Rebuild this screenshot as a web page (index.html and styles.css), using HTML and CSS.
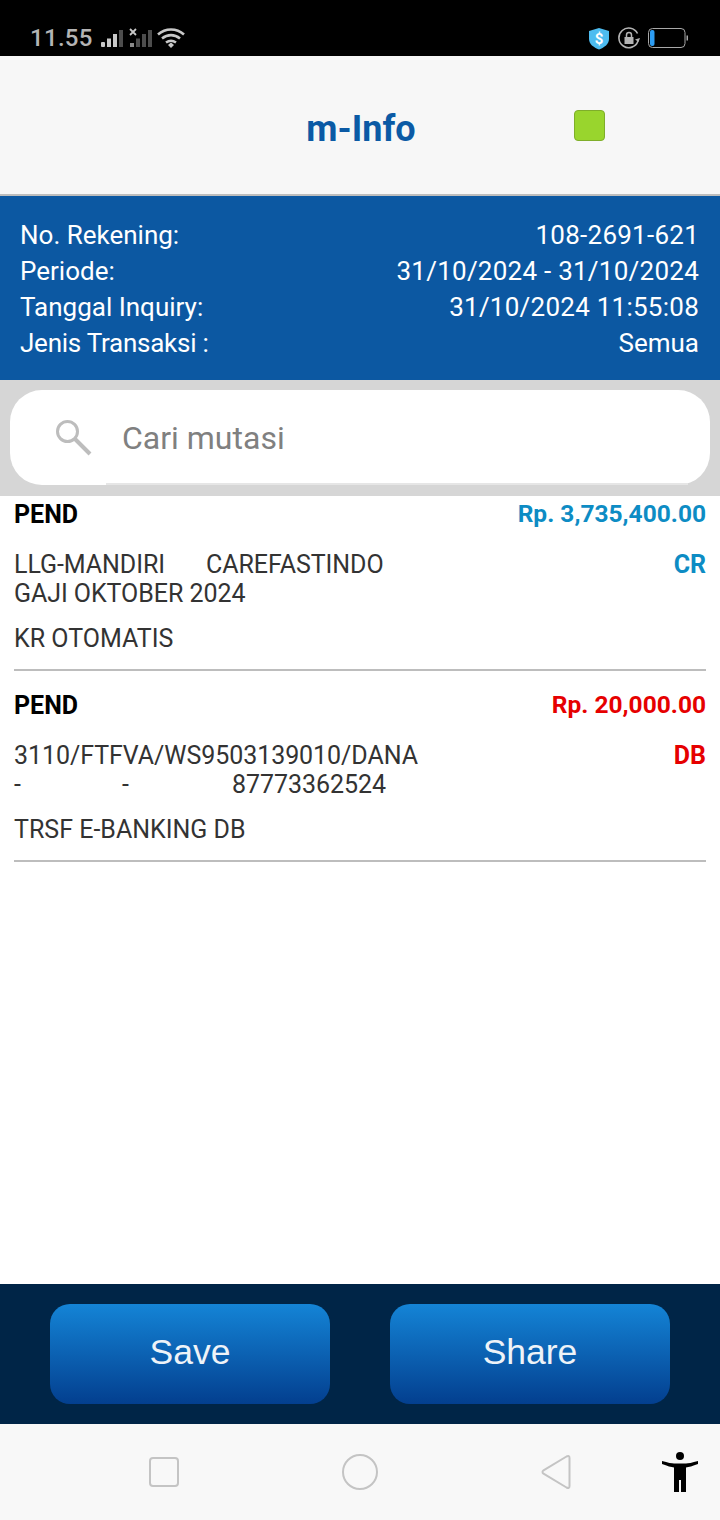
FILE: index.html
```html
<!DOCTYPE html>
<html>
  <head>
    <title>m-Info</title>
    <link rel="stylesheet" href="styles.css">
  </head>
  <body>
    <div class="phone">
      <div class="status-bar">
        <div class="status-left">
          <span class="clock">11.55</span>
          <svg class="signal" width="53" height="24" viewBox="0 0 53 24">
            <rect x="1" y="16" width="4" height="5" rx="1" fill="#c8c8c8"/>
            <rect x="7" y="12.500" width="4" height="8.500" fill="#c8c8c8"/>
            <rect x="13" y="8" width="4" height="13" fill="#c8c8c8"/>
            <rect x="19" y="4" width="4" height="17" fill="#4d4d4d"/>
            <path d="M30 3l6 6M36 3l-6 6" stroke="#c8c8c8" stroke-width="1.800"/>
            <rect x="30" y="17" width="4" height="4" fill="#8a8a8a"/>
            <rect x="36" y="12.500" width="4" height="8.500" fill="#4d4d4d"/>
            <rect x="42" y="8" width="4" height="13" fill="#4d4d4d"/>
            <rect x="48" y="4" width="4" height="17" fill="#4d4d4d"/>
          </svg>
          <svg class="wifi" width="28" height="22" viewBox="0 0 28 22">
            <g fill="none" stroke="#c8c8c8" stroke-width="2.600">
              <path d="M1 7.500C8.500 .8 19.500 .8 27 7.500"/>
              <path d="M5 11.500C10.500 7 17.500 7 23 11.500"/>
              <path d="M9 15.500C12.500 13 15.500 13 19 15.500"/>
            </g>
            <path d="M11 18L14 15.500 17 18 14 21Z" fill="#c8c8c8"/>
          </svg>
        </div>
        <div class="status-right">
          <svg width="22" height="23" viewBox="0 0 22 23">
            <path d="M11 1l10 3v8c0 5-4.500 8.500-10 10.500C5.500 20.500 1 17 1 12V4z" fill="#4dbcf0"/>
            <text x="11" y="17" text-anchor="middle" class="shield-text">$</text>
          </svg>
          <svg width="22" height="22" viewBox="0 0 22 22">
            <path d="M20 14A9.800 9.800 0 1 1 19.500 6.500" fill="none" stroke="#b4b4b4" stroke-width="1.600"/>
            <path d="M17 12.500l3.500 2.500 1.500-4z" fill="#b4b4b4"/>
            <path d="M6.500 10h9v7h-9z" fill="#b4b4b4"/>
            <path d="M8.500 10V8a2.500 2.500 0 0 1 5 0v2" fill="none" stroke="#b4b4b4" stroke-width="1.500"/>
          </svg>
          <svg width="40" height="22" viewBox="0 0 40 22">
            <rect x="0.500" y="1.500" width="36.500" height="19" rx="4" fill="none" stroke="#a8a8a8" stroke-width="1"/>
            <rect x="2" y="3" width="4.500" height="16" rx="2" fill="#2c9cf2"/>
            <rect x="38.500" y="8.500" width="1.500" height="5" fill="#a8a8a8"/>
          </svg>
        </div>
      </div>

      <header class="title-bar">
        <h1 class="title">m-Info</h1>
        <span class="green-box"></span>
      </header>

      <section class="account">
        <div class="account-row"><span>No. Rekening:</span><span class="digits">108-2691-621</span></div>
        <div class="account-row"><span>Periode:</span><span class="digits">31/10/2024 - 31/10/2024</span></div>
        <div class="account-row"><span>Tanggal Inquiry:</span><span class="digits">31/10/2024 11:55:08</span></div>
        <div class="account-row"><span class="type-label">Jenis Transaksi :</span><span>Semua</span></div>
      </section>

      <div class="search-wrap">
        <div class="search">
          <svg class="search-icon" width="36" height="36" viewBox="0 0 36 36">
            <circle cx="11.500" cy="11.500" r="10" fill="none" stroke="#bdbdbd" stroke-width="3"/>
            <path d="M19 19l15 15" stroke="#bdbdbd" stroke-width="4"/>
          </svg>
          <div class="search-field">Cari mutasi</div>
        </div>
      </div>

      <main class="list">
        <article class="trx">
          <div class="trx-head">
            <span class="trx-status">PEND</span>
            <span class="amount credit">Rp. 3,735,400.00</span>
          </div>
          <div class="trx-body">
            <div class="trx-desc"><span class="trx-bank">LLG-MANDIRI</span>CAREFASTINDO<br>GAJI OKTOBER 2024</div>
            <span class="trx-type credit">CR</span>
          </div>
          <div class="trx-note">KR OTOMATIS</div>
        </article>
        <article class="trx">
          <div class="trx-head">
            <span class="trx-status">PEND</span>
            <span class="amount debit">Rp. 20,000.00</span>
          </div>
          <div class="trx-body">
            <div class="trx-desc">3110/FTFVA/WS9503139010/DANA<br><span class="dash-a">-</span><span class="dash-b">-</span>87773362524</div>
            <span class="trx-type debit">DB</span>
          </div>
          <div class="trx-note">TRSF E-BANKING DB</div>
        </article>
      </main>

      <div class="actions">
        <button class="btn">Save</button>
        <button class="btn">Share</button>
      </div>

      <nav class="nav-bar">
        <svg class="nav-square" width="32" height="32" viewBox="0 0 32 32">
          <rect x="2" y="2" width="28" height="28" rx="3" fill="none" stroke="#c4c4c4" stroke-width="2"/>
        </svg>
        <svg class="nav-circle" width="38" height="38" viewBox="0 0 38 38">
          <circle cx="19" cy="19" r="17" fill="none" stroke="#c4c4c4" stroke-width="2"/>
        </svg>
        <svg class="nav-back" width="34" height="38" viewBox="0 0 34 38">
          <path d="M3.500 19q0-1 1-1.700L27.500 3.500q3-1.500 3 1.500v28q0 3-3 1.500L4.500 20.700q-1-.7-1-1.700z" fill="none" stroke="#c4c4c4" stroke-width="2" stroke-linejoin="round"/>
        </svg>
        <svg class="nav-access" width="36" height="42" viewBox="0 0 36 42">
          <circle cx="18" cy="4" r="4" fill="#000"/>
          <path d="M0 9Q9 11.500 12 11.500h12q3 0 12-2.500v3Q28 15 24 15.500V40h-5V28h-2v12h-5V15.500Q8 15 0 12z" fill="#000"/>
        </svg>
      </nav>
    </div>
  </body>
</html>
```

FILE: styles.css
```css
/* m-Info mutation screen */
html, body {
  margin: 0;
  padding: 0;
}
body {
  font-family: Roboto, "Liberation Sans", sans-serif;
}
.phone {
  width: 720px;
  height: 1520px;
  display: flex;
  flex-direction: column;
  background: #fff;
  overflow: hidden;
}

/* status bar */
.status-bar {
  height: 56px;
  flex: none;
  box-sizing: border-box;
  padding: 20px 32px 0 30px;
  background: #000;
  display: flex;
  justify-content: space-between;
  align-items: center;
}
.status-left, .status-right {
  display: flex;
  align-items: center;
}
.status-right {
  gap: 8px;
}
.clock {
  width: 70px;
  color: #b4b4b4;
  font-size: 24px;
  font-weight: 500;
  letter-spacing: 0.3px;
}
.wifi {
  margin-left: 4px;
}
.shield-text {
  font-family: Roboto, sans-serif;
  font-size: 15px;
  font-weight: 700;
  fill: #fff;
}

/* title */
.title-bar {
  height: 138px;
  flex: none;
  background: #f7f7f7;
  border-bottom: 2px solid #bdbdbd;
  display: flex;
  align-items: center;
  justify-content: center;
  position: relative;
}
.title {
  margin: 8px 0 0 2px;
  color: #0b5aa5;
  font-size: 36px;
  font-weight: 700;
}
.green-box {
  position: absolute;
  left: 574px;
  top: 54px;
  width: 31px;
  height: 31px;
  box-sizing: border-box;
  background: #99d52d;
  border: 1px solid #7fae2a;
  border-radius: 4px;
}

/* account info */
.account {
  height: 184px;
  flex: none;
  box-sizing: border-box;
  padding: 21px 21px 0 20px;
  background: #0c58a2;
  color: #fff;
  font-size: 26px;
}
.account-row {
  height: 36px;
  line-height: 36px;
  display: flex;
  justify-content: space-between;
}
.digits {
  letter-spacing: 0.25px;
}
.type-label {
  letter-spacing: -0.25px;
}

/* search */
.search-wrap {
  height: 116px;
  flex: none;
  box-sizing: border-box;
  padding: 10px 10px 11px;
  background: #d6d6d6;
}
.search {
  height: 95px;
  background: #fff;
  border-radius: 32px;
  display: flex;
  align-items: flex-start;
}
.search-icon {
  margin: 30px 0 0 46px;
}
.search-field {
  flex: 1;
  height: 95px;
  margin: 0 22px 0 14px;
  padding: 28px 0 0 16px;
  box-sizing: border-box;
  border-bottom: 2px solid #e6e6e6;
  color: #808080;
  font-size: 32px;
  line-height: 40px;
}

/* transactions */
.list {
  flex: 1;
}
.trx {
  height: 175px;
  box-sizing: border-box;
  margin: 0 14px 16px;
  border-bottom: 2px solid #bdbdbd;
  color: #333;
  font-size: 25px;
  line-height: 29px;
}
.trx-head {
  height: 54px;
  padding-top: 4px;
  box-sizing: border-box;
  display: flex;
  justify-content: space-between;
}
.trx-status {
  color: #000;
  font-weight: 700;
}
.amount {
  font-size: 24.5px;
  line-height: 28px;
  font-weight: 700;
}
.trx-type {
  font-weight: 700;
}
.trx-body {
  display: flex;
  justify-content: space-between;
}
.trx-desc {
  letter-spacing: -0.06px;
}
.trx-bank {
  display: inline-block;
  width: 192px;
}
.trx-note {
  margin-top: 16px;
}
.credit {
  color: #0d8cc4;
}
.debit {
  color: #e60000;
}
.dash-a, .dash-b {
  display: inline-block;
}
.dash-a {
  width: 108px;
}
.dash-b {
  width: 110px;
}

/* bottom buttons */
.actions {
  height: 140px;
  flex: none;
  box-sizing: border-box;
  padding: 20px 50px;
  background: #002547;
  display: flex;
  justify-content: space-between;
}
.btn {
  width: 280px;
  height: 100px;
  border: none;
  border-radius: 20px;
  background: linear-gradient(#1484d6, #033f8f);
  color: #eef3f8;
  font-family: "Liberation Sans", sans-serif;
  font-size: 35.5px;
  padding: 0 0 4px;
}

/* android nav */
.nav-bar {
  height: 96px;
  flex: none;
  background: #f8f8f8;
  position: relative;
}
.nav-bar svg {
  position: absolute;
}
.nav-square {
  left: 148px;
  top: 32px;
}
.nav-circle {
  left: 341px;
  top: 29px;
}
.nav-back {
  left: 539px;
  top: 29px;
}
.nav-access {
  left: 662px;
  top: 28px;
}
```
